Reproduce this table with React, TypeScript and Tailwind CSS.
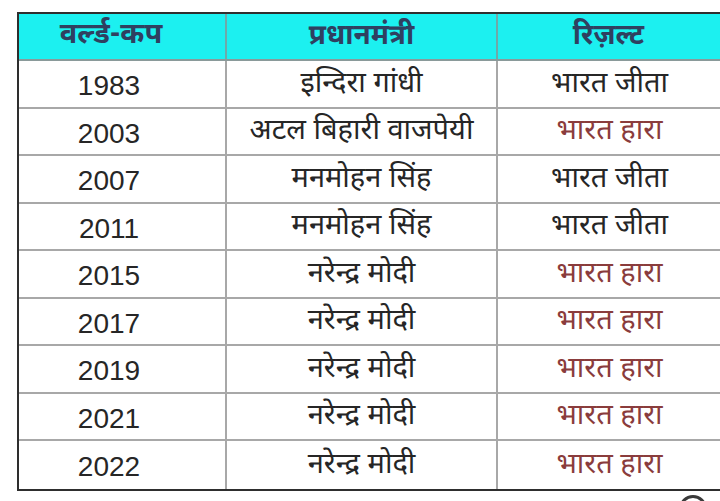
const rows = [
  { year: '1983', pm: 'इन्दिरा गांधी', won: true },
  { year: '2003', pm: 'अटल बिहारी वाजपेयी', won: false },
  { year: '2007', pm: 'मनमोहन सिंह', won: true },
  { year: '2011', pm: 'मनमोहन सिंह', won: true },
  { year: '2015', pm: 'नरेन्द्र मोदी', won: false },
  { year: '2017', pm: 'नरेन्द्र मोदी', won: false },
  { year: '2019', pm: 'नरेन्द्र मोदी', won: false },
  { year: '2021', pm: 'नरेन्द्र मोदी', won: false },
  { year: '2022', pm: 'नरेन्द्र मोदी', won: false },
];

const hindi = "font-['Noto_Sans_Devanagari','Lohit_Devanagari','Noto_Sans',sans-serif]";

export default function App() {
  return (
    <div className="relative w-[720px] h-[501px] overflow-hidden bg-white pt-[12px] pl-[17px]">
      <div className="w-[706px] border-2 border-[#2e2e2e] bg-white">
        <div className="grid grid-cols-[206px_271px_1fr] h-[47px] bg-[#1cf0f0] border-b-2 border-[#8a9a9a]">
          <div className={`flex items-center justify-center pr-[22px] text-[29px] leading-none font-bold text-[#2f4060] ${hindi}`}>वर्ल्ड-कप</div>
          <div className={`flex items-center justify-center border-l-2 border-[#6fa9a9] text-[28px] leading-none font-bold text-[#2f4060] ${hindi}`}>प्रधानमंत्री</div>
          <div className={`flex items-center justify-center border-l-2 border-[#6fa9a9] pr-[2px] text-[28px] leading-none font-bold text-[#2f4060] ${hindi}`}>रिज़ल्ट</div>
        </div>
        {rows.map((r, i) => (
          <div
            key={r.year}
            className={`grid grid-cols-[206px_271px_1fr] h-[47.5px] ${i < rows.length - 1 ? 'border-b-2 border-[#a8a8a8]' : ''}`}
          >
            <div className="flex items-center justify-center pr-[26px] pt-[5px] text-[28px] leading-none text-[#262626] font-['Liberation_Sans',Arial,sans-serif]">
              {r.year}
            </div>
            <div className={`flex items-center justify-center border-l-2 border-[#a8a8a8] pt-[3px] text-[29px] leading-none text-[#262626] ${hindi}`}>
              {r.pm}
            </div>
            <div
              className={`flex items-center justify-center border-l-2 border-[#a8a8a8] pt-[3px] text-[29px] leading-none ${hindi} ${r.won ? 'text-[#262626]' : 'text-[#8a3c3c]'}`}
            >
              {r.won ? 'भारत जीता' : 'भारत हारा'}
            </div>
          </div>
        ))}
      </div>
      <div className="absolute left-[679px] top-[495px] w-[28px] h-[28px] rounded-full border-[3px] border-[#3a3a3a]" />
    </div>
  );
}
